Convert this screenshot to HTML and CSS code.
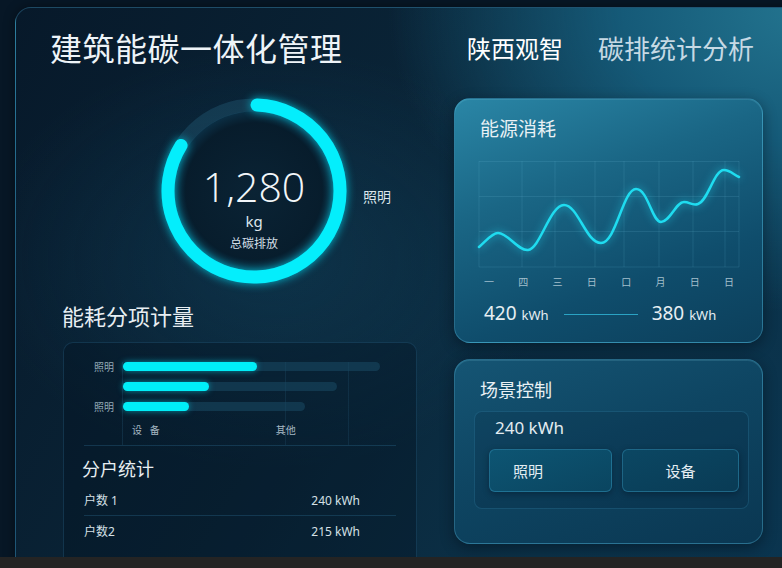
FILE: index.html
```html
<!DOCTYPE html>
<html lang="zh">
<head>
<meta charset="utf-8">
<title>建筑能碳一体化管理</title>
<link rel="stylesheet" href="styles.css">
</head>
<body>
<div class="stage">
  <div class="panel">
    <header class="header">
      <h1 class="title">建筑能碳一体化管理</h1>
      <nav class="nav">
        <span class="nav-item active">陕西观智</span>
        <span class="nav-item">碳排统计分析</span>
      </nav>
    </header>
    <div class="body">
      <section class="left">
        <div class="gauge-row">
          <div class="gauge">
            <svg class="gauge-svg" width="200" height="200" viewBox="0 0 200 200">
              <defs>
                <radialGradient id="inner" cx="50%" cy="50%" r="50%">
                  <stop offset="0%" stop-color="#0a2233" stop-opacity="0.9"/>
                  <stop offset="85%" stop-color="#071b2a" stop-opacity="0.9"/>
                  <stop offset="100%" stop-color="#0b3046" stop-opacity="0.9"/>
                </radialGradient>
              </defs>
              <circle cx="100" cy="100" r="80" fill="url(#inner)"/>
              <circle class="track" cx="100" cy="100" r="86"/>
              <path class="arc" d="M103,14.05 A86,86 0 1 1 27.1,54.4"/>
            </svg>
            <div class="gauge-text">
              <div class="gauge-value">1,280</div>
              <div class="gauge-unit">kg</div>
              <div class="gauge-label">总碳排放</div>
            </div>
          </div>
          <span class="gauge-side">照明</span>
        </div>
        <h2 class="section-title">能耗分项计量</h2>
        <div class="sub-card">
          <div class="bars">
            <div class="bar-row">
              <span class="bar-label">照明</span>
              <div class="track-bar" style="width:257px"><div class="fill" style="width:134px"></div></div>
            </div>
            <div class="bar-row">
              <span class="bar-label"></span>
              <div class="track-bar" style="width:214px"><div class="fill" style="width:86px"></div></div>
            </div>
            <div class="bar-row">
              <span class="bar-label">照明</span>
              <div class="track-bar" style="width:182px"><div class="fill" style="width:66px"></div></div>
            </div>
            <div class="bar-axis">
              <span class="axis-a">设&nbsp;&nbsp;&nbsp;备</span>
              <span class="axis-b">其他</span>
            </div>
          </div>
          <div class="divider"></div>
          <h3 class="sub-title">分户统计</h3>
          <div class="list-row first"><span>户数 1</span><span>240 kWh</span></div>
          <div class="divider"></div>
          <div class="list-row"><span>户数2</span><span>215 kWh</span></div>
        </div>
      </section>
      <section class="right">
        <div class="card energy">
          <h2 class="card-title">能源消耗</h2>
          <svg class="chart" width="262" height="107" viewBox="0 0 262 107">
            <g class="grid">
              <line x1="1" y1="0.5" x2="261" y2="0.5"/>
              <line x1="1" y1="35.5" x2="261" y2="35.5"/>
              <line x1="1" y1="70.5" x2="261" y2="70.5"/>
              <line x1="1" y1="106" x2="261" y2="106"/>
              <line x1="1" y1="0" x2="1" y2="106"/>
              <line x1="44" y1="0" x2="44" y2="106"/>
              <line x1="77" y1="0" x2="77" y2="106"/>
              <line x1="117" y1="0" x2="117" y2="106"/>
              <line x1="146" y1="0" x2="146" y2="106"/>
              <line x1="181" y1="0" x2="181" y2="106"/>
              <line x1="215" y1="0" x2="215" y2="106"/>
              <line x1="247" y1="0" x2="247" y2="106"/>
              <line x1="261" y1="0" x2="261" y2="106"/>
            </g>
            <path class="line" d="M1,86 C8,80 14,72 20,72 C30,72 40,90 50,89 C62,88 72,44 86,44 C100,44 108,82 123,82 C138,82 145,28 158,28 C170,28 174,61 183,61 C192,61 198,41 206,41 C212,41 214,45 220,43 C230,40 236,9 246,9 C252,9 256,14 261,16"/>
          </svg>
          <div class="x-labels">
            <span>一</span><span>四</span><span>三</span><span>日</span><span>口</span><span>月</span><span>日</span><span>日</span>
          </div>
          <div class="summary">
            <span class="num">420 <small>kWh</small></span>
            <span class="sum-line"></span>
            <span class="num">380 <small>kWh</small></span>
          </div>
        </div>
        <div class="card scene">
          <h2 class="card-title">场景控制</h2>
          <div class="scene-box">
            <div class="scene-value">240 kWh</div>
            <div class="buttons">
              <button class="btn btn-left">照明</button>
              <button class="btn btn-right">设备</button>
            </div>
          </div>
        </div>
      </section>
    </div>
  </div>
</div>
<div class="strip"></div>
</body>
</html>
```

FILE: styles.css
```css
* { box-sizing: border-box; }
html, body { margin: 0; padding: 0; }
body {
  width: 782px;
  height: 568px;
  overflow: hidden;
  background: #071726;
  font-family: "Noto Sans", "Noto Sans CJK SC", sans-serif;
  color: #e6eef3;
}
h1, h2, h3 { margin: 0; font-weight: 400; }

.stage {
  height: 557px;
  overflow: hidden;
  padding: 7px 0 0 15px;
}
.strip { height: 11px; background: #242424; }

.panel {
  width: 790px;
  height: 570px;
  border: 1px solid rgba(70, 150, 190, 0.35);
  border-radius: 16px;
  background:
    radial-gradient(ellipse 420px 300px at 255px 250px, rgba(20, 80, 110, 0.35), transparent 70%),
    radial-gradient(ellipse 520px 380px at 100% 0%, #23748f 0%, #155a78 35%, rgba(14, 70, 98, 0) 80%),
    linear-gradient(120deg, #07192a 0%, #0a2538 45%, #0b3148 75%, #0a3550 100%);
  box-shadow: 0 0 12px rgba(0, 0, 0, 0.4);
}

.header {
  display: grid;
  grid-template-columns: 417px auto;
  align-items: center;
  height: 82px;
  padding: 23px 0 0 34px;
  align-content: start;
}
.title {
  font-size: 32px;
  line-height: 36px;
  color: #eef4f8;
  letter-spacing: 0.5px;
}
.nav { display: flex; gap: 35px; align-items: center; }
.nav-item { font-size: 26px; line-height: 36px; color: #c6d9e4; }
.nav-item.active { font-size: 24px; color: #ffffff; }

.body { display: flex; }
.left { width: 438px; }
.right {
  width: 309px;
  padding-top: 8px;
  display: flex;
  flex-direction: column;
  gap: 16px;
}

/* gauge */
.gauge-row { display: flex; align-items: center; margin-left: 138px; margin-top: 1px; }
.gauge { display: grid; width: 200px; height: 200px; }
.gauge > * { grid-area: 1 / 1; }
.gauge-svg { overflow: visible; }
.track { fill: none; stroke: rgba(40, 100, 130, 0.35); stroke-width: 13; }
.arc {
  fill: none;
  stroke: #04eefc;
  stroke-width: 13;
  stroke-linecap: round;
  filter: drop-shadow(0 0 5px rgba(0, 230, 255, 0.75));
}
.gauge-text { display: flex; flex-direction: column; align-items: center; padding-top: 77px; }
.gauge-value {
  font-family: "Open Sans", "Noto Sans", sans-serif;
  font-weight: 300;
  font-size: 41px;
  line-height: 36px;
  color: #f2f6f9;
}
.gauge-unit { font-size: 15px; line-height: 18px; margin-top: 8px; color: #dbe6ec; }
.gauge-label { font-size: 12px; line-height: 16px; margin-top: 6px; color: #d2dee5; }
.gauge-side { font-size: 14px; color: #dbe5eb; margin-left: 9px; margin-top: 10px; }

.section-title {
  font-size: 22px;
  line-height: 30px;
  margin: 10px 0 0 46px;
  color: #e7eef2;
}

.sub-card {
  width: 354px;
  height: 240px;
  margin: 11px 0 0 47px;
  border: 1px solid rgba(50, 120, 160, 0.28);
  border-radius: 10px;
  background: rgba(3, 18, 32, 0.35);
  padding-top: 19px;
}
.bars {
  display: flex;
  flex-direction: column;
  gap: 11px;
  padding-bottom: 7px;
  background-image:
    linear-gradient(to right, rgba(60, 130, 170, 0.18), rgba(60, 130, 170, 0.18)),
    linear-gradient(to right, rgba(60, 130, 170, 0.14), rgba(60, 130, 170, 0.14)),
    linear-gradient(to right, rgba(60, 130, 170, 0.14), rgba(60, 130, 170, 0.14));
  background-size: 1px 90px, 1px 90px, 1px 90px;
  background-position: 58px 0, 221px 0, 284px 0;
  background-repeat: no-repeat;
}
.bar-row { display: flex; align-items: center; height: 9px; }
.bar-label {
  width: 50px;
  text-align: right;
  font-size: 10px;
  color: #93a9b6;
  margin-right: 9px;
}
.track-bar {
  height: 9px;
  border-radius: 5px;
  background: rgba(25, 75, 100, 0.55);
}
.fill {
  height: 9px;
  border-radius: 5px;
  background: #00eef8;
  box-shadow: 0 0 6px rgba(0, 230, 255, 0.55);
}
.bar-axis { display: flex; height: 16px; margin-top: 0; font-size: 10px; color: #a5b8c3; }
.axis-a { margin-left: 68px; }
.axis-b { margin-left: 116px; }

.divider {
  height: 1px;
  margin: 0 20px 0 20px;
  background: rgba(50, 120, 160, 0.3);
}
.sub-title {
  font-size: 18px;
  line-height: 26px;
  margin: 10px 0 0 18px;
  color: #e8eef2;
}
.list-row {
  display: flex;
  justify-content: space-between;
  width: 276px;
  margin-left: 20px;
  height: 30px;
  align-items: center;
  font-size: 12px;
  color: #d5e0e6;
}
.list-row.first { margin-top: 3px; }

/* right cards */
.card {
  border: 1px solid rgba(90, 185, 220, 0.35);
  border-radius: 16px;
  box-shadow: 0 4px 14px rgba(0, 10, 20, 0.45), inset 0 1px 0 rgba(140, 220, 240, 0.15);
}
.energy {
  height: 245px;
  padding: 17px 0 0 23px;
  background: linear-gradient(160deg, #2a86a6 0%, #1a6685 35%, #0f4d6c 70%, #0c3f5b 100%);
}
.card-title {
  font-size: 19px;
  line-height: 26px;
  margin-left: 2px;
  color: #e9f1f5;
}
.chart { display: block; margin-top: 19px; overflow: visible; }
.grid line { stroke: rgba(120, 200, 225, 0.14); stroke-width: 1; }
.line {
  fill: none;
  stroke: #1fdcf0;
  stroke-width: 2.5;
  stroke-linecap: round;
  filter: drop-shadow(0 0 4px rgba(30, 220, 245, 0.7));
}
.x-labels {
  display: flex;
  justify-content: space-between;
  width: 260px;
  margin: 7px 0 0 1px;
  font-size: 10px;
  line-height: 14px;
  color: #a3bfcc;
}
.x-labels span { width: 20px; text-align: center; }
.summary {
  display: flex;
  align-items: center;
  margin: 12px 0 0 6px;
}
.num {
  font-size: 19px;
  line-height: 24px;
  color: #e6eef2;
}
.num small { font-size: 13px; }
.sum-line {
  width: 74px;
  height: 1px;
  margin: 0 14px 0 15px;
  background: #2aa3c4;
}

.scene {
  height: 185px;
  padding: 17px 0 0 19px;
  background: linear-gradient(160deg, #155574 0%, #0e4562 45%, #0a3752 100%);
}
.scene .card-title { font-size: 18px; margin-left: 6px; }
.scene-box {
  width: 275px;
  height: 98px;
  margin-top: 8px;
  border: 1px solid rgba(60, 150, 190, 0.25);
  border-radius: 8px;
  background: rgba(4, 30, 48, 0.18);
  padding: 5px 0 0 14px;
}
.scene-value { font-size: 17px; line-height: 22px; margin-left: 6px; color: #e3ecf1; }
.buttons { display: flex; gap: 10px; margin-top: 10px; }
.btn {
  height: 43px;
  border-radius: 6px;
  border: 1px solid rgba(60, 160, 200, 0.4);
  font-family: "Noto Sans", "Noto Sans CJK SC", sans-serif;
  font-size: 15px;
  color: #e4edf2;
  box-shadow: 0 2px 6px rgba(0, 10, 20, 0.35);
}
.btn-left {
  width: 123px;
  text-align: left;
  padding-left: 23px;
  background: linear-gradient(160deg, #0d5573, #0a4560);
}
.btn-right {
  width: 117px;
  background: linear-gradient(160deg, #0b4763, #093b55);
}
```
